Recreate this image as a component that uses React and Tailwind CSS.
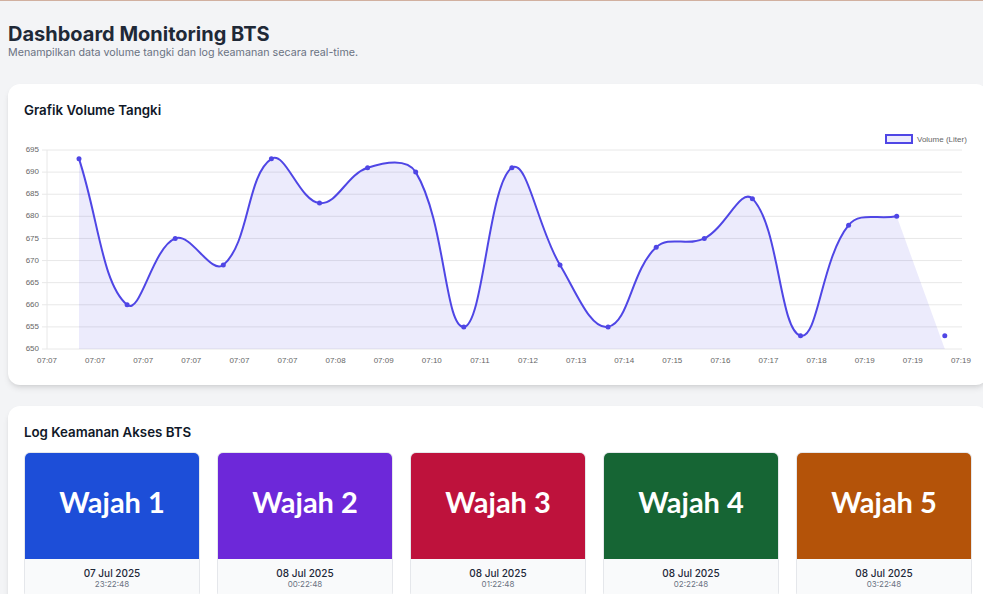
import React from "react";

const VALUES = [693, 660, 675, 669, 693, 683, 691, 690, 655, 691, 669, 655, 673, 675, 684, 653, 678, 680, 653];
const XLABELS = ["07:07","07:07","07:07","07:07","07:07","07:07","07:08","07:09","07:10","07:11","07:12","07:13","07:14","07:15","07:16","07:17","07:18","07:19","07:19","07:19"];

const LEFT = 23, RIGHT = 938, TOP = 26, BOTTOM = 225;
const PPU = (BOTTOM - TOP) / 45;
const yOf = (v) => BOTTOM - (v - 650) * PPU;
const xOf = (i) => 55 + 48.1 * i;

function buildPaths() {
  const pts = VALUES.map((v, i) => ({ x: xOf(i), y: yOf(v) }));
  const line = pts.slice(0, 18);
  const t = 0.4;
  const cps = line.map((cur, i) => {
    const prev = i === 0 ? cur : line[i - 1];
    const next = i === line.length - 1 ? cur : line[i + 1];
    const d01 = Math.hypot(cur.x - prev.x, cur.y - prev.y);
    const d12 = Math.hypot(next.x - cur.x, next.y - cur.y);
    let s01 = d01 / (d01 + d12);
    let s12 = d12 / (d01 + d12);
    if (isNaN(s01)) s01 = 0;
    if (isNaN(s12)) s12 = 0;
    const fa = t * s01, fb = t * s12;
    const clampY = (y) => Math.max(TOP, Math.min(BOTTOM, y));
    const clampX = (x) => Math.max(LEFT, Math.min(RIGHT, x));
    return {
      p: { x: clampX(cur.x - fa * (next.x - prev.x)), y: clampY(cur.y - fa * (next.y - prev.y)) },
      n: { x: clampX(cur.x + fb * (next.x - prev.x)), y: clampY(cur.y + fb * (next.y - prev.y)) },
    };
  });
  let d = `M${line[0].x},${line[0].y}`;
  for (let i = 1; i < line.length; i++) {
    const a = cps[i - 1].n, b = cps[i].p, c = line[i];
    d += ` C${a.x},${a.y} ${b.x},${b.y} ${c.x},${c.y}`;
  }
  const last = pts[18];
  const fill = `M${line[0].x},${BOTTOM} L${line[0].x},${line[0].y}` + d.slice(d.indexOf(" C")) + ` L${last.x},${BOTTOM} Z`;
  return { d, fill, pts };
}

function Chart() {
  const { d, fill, pts } = buildPaths();
  const ticks = [650, 655, 660, 665, 670, 675, 680, 685, 690, 695];
  const font = { fontFamily: '"Liberation Sans", Arial, sans-serif', fontSize: 8 };
  return (
    <svg className="mt-1 block" width="948" height="245" viewBox="0 0 948 245">
      {ticks.map((v) => (
        <g key={v}>
          <line x1={18} x2={RIGHT} y1={yOf(v)} y2={yOf(v)} stroke="#e8e8e8" strokeWidth="1" />
          <text x={15} y={yOf(v)} textAnchor="end" dominantBaseline="middle" fill="#666" style={font}>{v}</text>
        </g>
      ))}
      <line x1={LEFT} x2={LEFT} y1={TOP} y2={BOTTOM} stroke="#e8e8e8" strokeWidth="1" />
      {XLABELS.map((l, i) => (
        <text key={i} x={LEFT + 48.1 * i} y={237} textAnchor="middle" dominantBaseline="middle" fill="#666" style={font}>{l}</text>
      ))}
      <path d={fill} fill="rgba(79,70,229,0.11)" />
      <path d={d} fill="none" stroke="#4f46e5" strokeWidth="2" />
      {pts.map((p, i) => (
        <circle key={i} cx={p.x} cy={p.y} r="2.5" fill="#4f46e5" />
      ))}
      <rect x={862} y={11} width={26} height={8} fill="rgba(79,70,229,0.11)" stroke="#4f46e5" strokeWidth="2" />
      <text x={893} y={15.5} dominantBaseline="middle" fill="#666" style={font}>Volume (Liter)</text>
    </svg>
  );
}

const CARDS = [
  { label: "Wajah 1", bg: "bg-[#1d4ed8]", date: "07 Jul 2025", time: "23:22:48" },
  { label: "Wajah 2", bg: "bg-[#6d28d9]", date: "08 Jul 2025", time: "00:22:48" },
  { label: "Wajah 3", bg: "bg-[#be123c]", date: "08 Jul 2025", time: "01:22:48" },
  { label: "Wajah 4", bg: "bg-[#166534]", date: "08 Jul 2025", time: "02:22:48" },
  { label: "Wajah 5", bg: "bg-[#b45309]", date: "08 Jul 2025", time: "03:22:48" },
];

export default function App() {
  return (
    <div className="w-full h-[594px] overflow-hidden bg-gray-100 font-['Inter',sans-serif]">
      <div className="h-px bg-[#d1b0a0]" />
      <div className="w-[996px] px-2 pt-[21px]">
        <h1 className="text-[20px] leading-6 font-bold text-[#1f2937]">Dashboard Monitoring BTS</h1>
        <p className="text-[10.7px] leading-[14px] text-gray-500">Menampilkan data volume tangki dan log keamanan secara real-time.</p>

        <section className="mt-6 bg-white rounded-xl shadow-md px-4 pt-4 pb-4">
          <h2 className="text-[13.3px] leading-5 font-semibold text-gray-900">Grafik Volume Tangki</h2>
          <Chart />
        </section>

        <section className="mt-[21px] bg-white rounded-xl shadow-md px-4 pt-4 pb-4">
          <h2 className="text-[13.3px] leading-5 font-semibold text-gray-900">Log Keamanan Akses BTS</h2>
          <div className="mt-[10px] grid grid-cols-5 gap-[17px]">
            {CARDS.map((c) => (
              <div key={c.label} className="border border-gray-200 rounded-md overflow-hidden">
                <div className={`h-[106px] pb-2 flex items-center justify-center ${c.bg}`}>
                  <span className="text-white font-bold text-[29px] font-['Lato',sans-serif]">{c.label}</span>
                </div>
                <div className="bg-gray-50 pt-2 pb-2 text-center">
                  <div className="text-[10px] leading-3 font-medium text-gray-800">{c.date}</div>
                  <div className="text-[8px] leading-[10px] text-gray-500">{c.time}</div>
                </div>
              </div>
            ))}
          </div>
        </section>
      </div>
    </div>
  );
}
